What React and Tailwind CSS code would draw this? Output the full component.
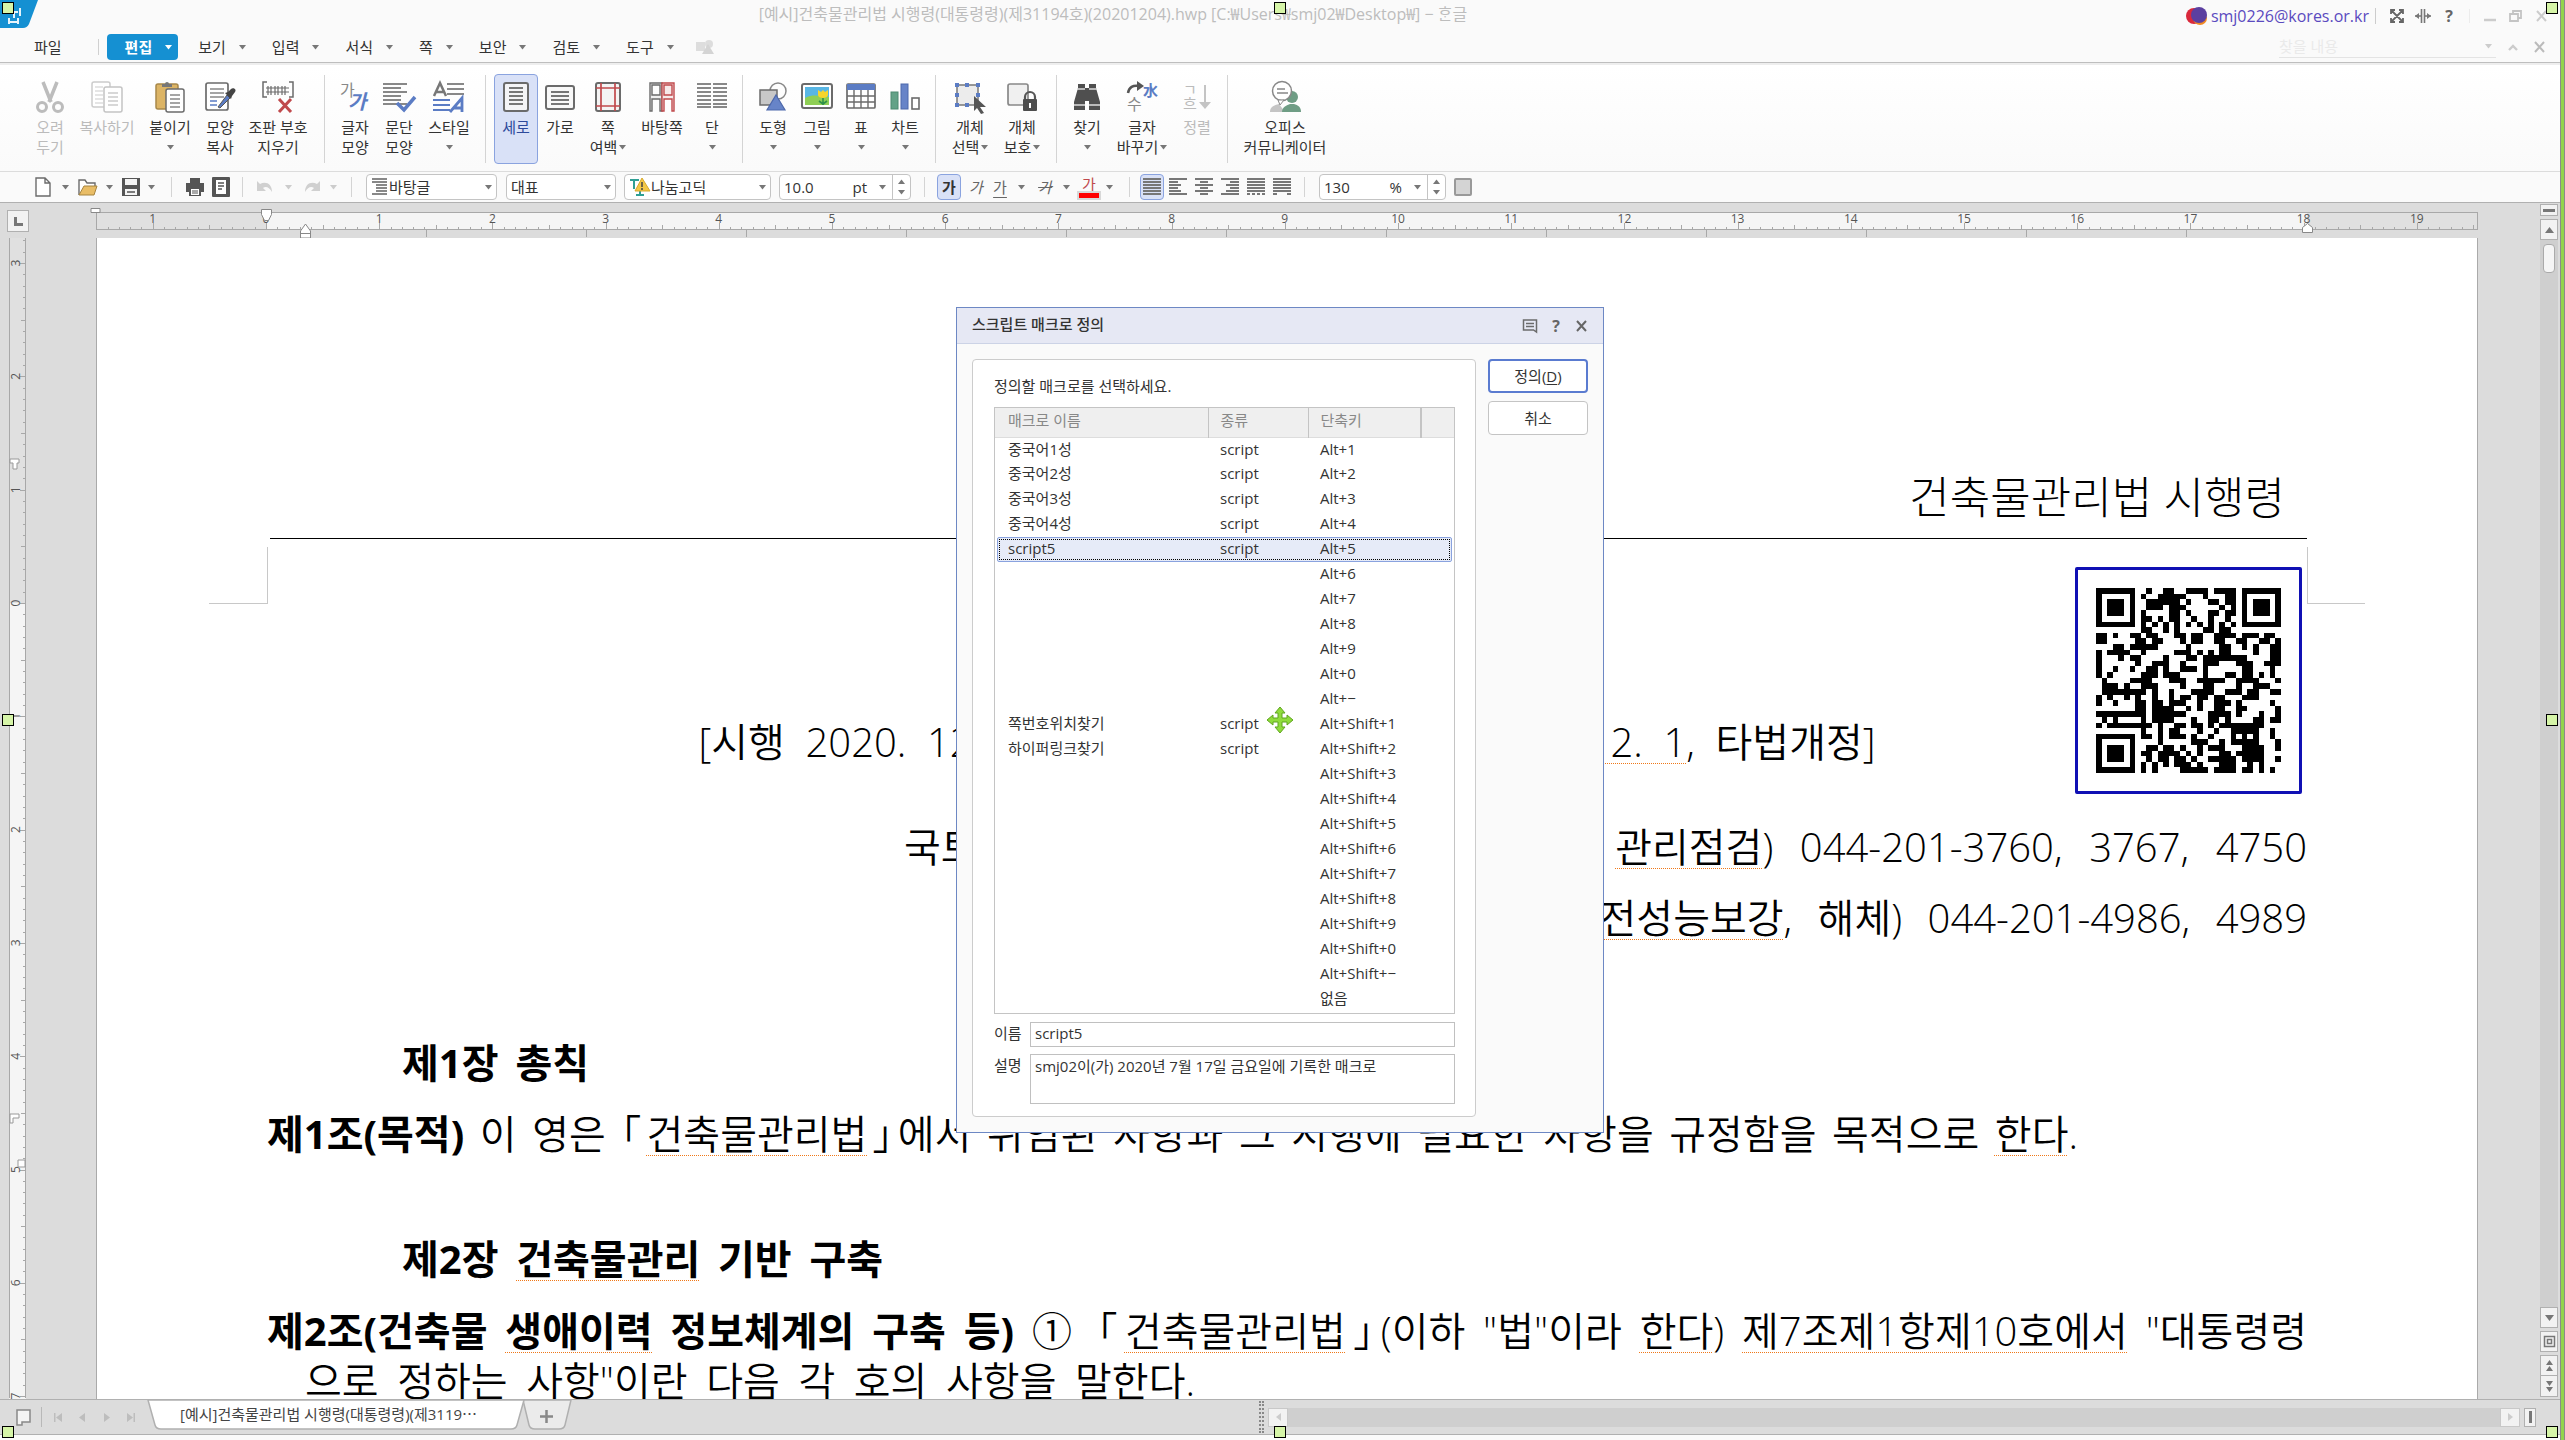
import { useState } from 'react';

const QR_ROWS = [
    '#######..#..##..####.####.#######',
    '#.....#.#..#####...#...##.#.....#',
    '#.###.#..######.#...##.##.#.###.#',
    '#.###.#..###.###......#.#.#.###.#',
    '#.###.#.#....##.#...##.##.#.###.#',
    '#.....#.##.#.##..#..#..#..#.....#',
    '#######.#.#.#.#.#.#.#.#.#.#######',
    '........##..#.#....##.##.........',
    '##.#..##.##...##.##..####.###.##.',
    '##.....##.##...#.##..##..##..##.#',
    '...##.#####.....#.....##..#.#..##',
    '#.####..#.....###.#.#.##....#..##',
    '#...#.##....#...##.########....##',
    '#......#..###..#...###...###..###',
    '#..#..#..##.#..###.#......##...#.',
    '#.#.....###.###....#...##.##.#.#.',
    '.#....####...###..#####..####...#',
    '.###.#..###....#...##....#..###..',
    '.########.#..#...####..###.##..##',
    '#.#..#.#..#..#.##.##.##...###....',
    '#..#...##.##.###..#..###.#.....#.',
    '.......##.####..#.#..##..##.....#',
    '#########.######....####.#...#..#',
    '.#.#....#.####...#..##.#....##.##',
    '#.########.#..##.##.#.########...',
    '........#..#.##...#..#..#####..#.',
    '#######.##.#.###.#..#...#.#.#..#.',
    '#.....#....#.....###..#.#####...#',
    '#.###.#..##.##.#..#.###...####..#',
    '#.###.#.##.####.#.#...##.#####...',
    '#.###.#..#.##.##.#..#####.####..#',
    '#.....#.#.#.#.###.#...###..#.#...',
    '#######.#.#....#####.####.##.#.#.',
];

const QR_PATH = QR_ROWS.map((row, y) =>
    [...row].map((c, x) => (c === '#' ? `M${x} ${y}h1v1h-1z` : '')).join('')
).join('');

const MACROS = [
    ['중국어1성', 'script', 'Alt+1'],
    ['중국어2성', 'script', 'Alt+2'],
    ['중국어3성', 'script', 'Alt+3'],
    ['중국어4성', 'script', 'Alt+4'],
    ['script5', 'script', 'Alt+5'],
    ['', '', 'Alt+6'],
    ['', '', 'Alt+7'],
    ['', '', 'Alt+8'],
    ['', '', 'Alt+9'],
    ['', '', 'Alt+0'],
    ['', '', 'Alt+−'],
    ['쪽번호위치찾기', 'script', 'Alt+Shift+1'],
    ['하이퍼링크찾기', 'script', 'Alt+Shift+2'],
    ['', '', 'Alt+Shift+3'],
    ['', '', 'Alt+Shift+4'],
    ['', '', 'Alt+Shift+5'],
    ['', '', 'Alt+Shift+6'],
    ['', '', 'Alt+Shift+7'],
    ['', '', 'Alt+Shift+8'],
    ['', '', 'Alt+Shift+9'],
    ['', '', 'Alt+Shift+0'],
    ['', '', 'Alt+Shift+−'],
    ['', '', '없음'],
];

const G = '#6b6b6b';
const BLUE = '#5b7cc4';

const Svg = ({ w = 32, h = 32, vw = w, vh = h, children, className = '' }) => (
    <svg width={w} height={h} viewBox={`0 0 ${vw} ${vh}`} fill="none" className={`overflow-visible ${className}`} aria-hidden="true">
        {children}
    </svg>
);

const Caret = ({ className = 'text-[#777]' }) => (
    <Svg w={7} h={5} className={className}>
        <path d="M0 0h7L3.5 4.5z" fill="currentColor" />
    </Svg>
);

const lines = (x1, x2, ys) => ys.map((y) => `M${x1} ${y}H${x2}`).join('');

const icons = {
    cut: (
        <Svg>
            <path d="M9 1l8 20M23 1l-8 20" stroke="#bcbcbc" strokeWidth="3.5" />
            <circle cx="8" cy="26" r="4.5" stroke="#bcbcbc" strokeWidth="3" />
            <circle cx="24" cy="26" r="4.5" stroke="#bcbcbc" strokeWidth="3" />
        </Svg>
    ),
    copy: (
        <Svg>
            <rect x="1" y="1" width="18" height="25" rx="2" fill="#fff" stroke="#ccc" strokeWidth="1.5" />
            <path d={lines(4, 12, [6, 10, 14, 18, 22])} stroke="#ddd" strokeWidth="1.5" />
            <rect x="13" y="6" width="18" height="25" rx="2" fill="#fff" stroke="#c4c4c4" strokeWidth="1.5" />
            <path d={lines(17, 27, [12, 16, 20, 24])} stroke="#ccc" strokeWidth="1.5" />
        </Svg>
    ),
    paste: (
        <Svg>
            <rect x="2" y="3" width="22" height="25" rx="2" fill="#dcb465" stroke="#a8884a" strokeWidth="1.5" />
            <path d="M8 6V3h3a2 2 0 0 1 4 0h3v3z" fill="#777" />
            <rect x="12" y="8" width="18" height="23" rx="2" fill="#fff" stroke={G} strokeWidth="1.5" />
            <path d={lines(16, 26, [14, 18, 22, 26])} stroke="#888" strokeWidth="1.5" />
        </Svg>
    ),
    shape: (
        <Svg>
            <rect x="2" y="2" width="22" height="27" rx="2" fill="#fff" stroke={G} strokeWidth="1.7" />
            <path d={lines(6, 20, [8, 12, 16])} stroke="#888" strokeWidth="1.7" />
            <path d={lines(6, 13, [20, 24])} stroke={BLUE} strokeWidth="1.7" />
            <path d="M14 26l9-12 3 3-10 10z" fill={BLUE} stroke="#555" />
            <path d="M21 12l6 6 1-3 3-4c2-3-2-5-4-3l-3 3z" fill="#444" />
        </Svg>
    ),
    erase: (
        <Svg>
            <path d="M5 1H1v15h4M27 1h4v15h-4" stroke={G} strokeWidth="1.5" />
            <path d="M6 5v9M9 5v9M13 5v9M16 5v9M20 5v9M23 5v9M4 7h23M4 11h23" stroke={G} strokeWidth="1.2" />
            <path d="M17 18l12 13M29 18L17 31" stroke="#c0494c" strokeWidth="3" />
        </Svg>
    ),
    char: (
        <Svg>
            <text x="1" y="15" fontSize="16" fill="#888">가</text>
            <text x="9" y="28" fontSize="20" fontStyle="italic" fontWeight="bold" fill={BLUE}>가</text>
        </Svg>
    ),
    para: (
        <Svg>
            <path d={lines(0, 24, [3, 11, 23]) + lines(0, 18, [7, 15, 19])} stroke="#888" strokeWidth="2" />
            <path d="M14 22l7 7L32 16" stroke={BLUE} strokeWidth="3.5" />
        </Svg>
    ),
    style: (
        <Svg>
            <path d="M1 15L7 2l6 13M3 11h8" stroke="#777" strokeWidth="2.5" />
            <path d={lines(14, 31, [3, 8, 13])} stroke="#888" strokeWidth="2" />
            <path d={lines(0, 17, [19, 24, 29])} stroke={BLUE} strokeWidth="2" />
            <path d="M17 31l12-14v14M21 27h8" stroke={BLUE} strokeWidth="2.8" />
        </Svg>
    ),
    portrait: (
        <Svg>
            <rect x="4" y="2" width="24" height="28" rx="2" fill="#f4f4f6" stroke={G} strokeWidth="2" />
            <path d={lines(9, 23, [7, 11, 15, 19, 23])} stroke="#777" strokeWidth="2" />
        </Svg>
    ),
    landscape: (
        <Svg>
            <rect x="2" y="5" width="28" height="23" rx="2" fill="#f8f8f8" stroke={G} strokeWidth="2" />
            <path d={lines(7, 25, [11, 15, 19, 23])} stroke="#777" strokeWidth="2" />
        </Svg>
    ),
    margin: (
        <Svg>
            <rect x="4" y="2" width="24" height="28" rx="2" fill="#f4f4f4" stroke={G} strokeWidth="2" />
            <path d="M9 2v28M23 2v28M4 7h24M4 25h24" stroke="#c0494c" strokeWidth="1.7" />
        </Svg>
    ),
    master: (
        <Svg>
            <path d="M16 2H4v28h2V18h8v12h2zM6 4h8v10H6z" fill="#f0f0f0" stroke={G} strokeWidth="1.4" />
            <path d="M16 2h12v28h-2V18h-8v12h-2zM18 4h8v10h-8z" fill="#f6eaea" stroke="#c0494c" strokeWidth="1.4" />
        </Svg>
    ),
    columns: (
        <Svg>
            <path d={lines(1, 15, [3, 7, 11, 15, 19, 23, 26]) + lines(17, 31, [3, 7, 11, 15, 19, 23, 26])} stroke="#888" strokeWidth="2" />
        </Svg>
    ),
    draw: (
        <Svg>
            <circle cx="21" cy="10" r="8" stroke="#888" strokeWidth="1.5" />
            <rect x="3" y="9" width="17" height="15" fill="#c8c8c8" stroke={G} strokeWidth="1.5" />
            <path d="M19 14l9 15H10z" fill="#6784c8" stroke="#4d68ab" strokeWidth="1.2" />
        </Svg>
    ),
    picture: (
        <Svg>
            <rect x="1" y="3" width="30" height="24" rx="2" fill="#fff" stroke={G} strokeWidth="2" />
            <rect x="4" y="6" width="24" height="18" fill="#58b6e4" />
            <path d="M4 17c8-4 14-2 24-1v8H4z" fill="#8fcf55" />
            <path d="M17 9l3 2 2-2 2 2 3-2v5c0 4-10 4-10 0z" fill="#f7d52a" />
            <path d="M22 17v7M22 23l-4-3M22 23l4-3" stroke="#2f9048" strokeWidth="1.6" />
        </Svg>
    ),
    table: (
        <Svg>
            <rect x="2" y="3" width="28" height="24" rx="1" fill="#fff" stroke={G} strokeWidth="1.7" />
            <rect x="2" y="3" width="28" height="6" fill={BLUE} />
            <path d="M9 9v18M16 9v18M23 9v18M2 15h28M2 21h28" stroke={G} strokeWidth="1.4" />
        </Svg>
    ),
    chart: (
        <Svg>
            <rect x="2" y="11" width="7" height="17" fill="#63a287" stroke="#4d8a70" />
            <rect x="12" y="3" width="7" height="25" fill="#6784c8" stroke="#4d68ab" />
            <rect x="23" y="17" width="7" height="11" fill="#fff" stroke={G} strokeWidth="1.6" />
        </Svg>
    ),
    select: (
        <Svg>
            <rect x="3" y="4" width="21" height="20" fill="#ececec" stroke="#777" strokeWidth="1.5" />
            <path d="M1 2h4v4H1zM11 2h4v4h-4zM22 2h4v4h-4zM1 12h4v4H1zM22 12h4v4h-4zM1 22h4v4H1zM11 22h4v4h-4z" fill={BLUE} />
            <path d="M20 15l12 11-6 0 4 6-3 1-4-6-3 3z" fill="#555" />
        </Svg>
    ),
    protect: (
        <Svg>
            <rect x="2" y="3" width="20" height="21" rx="2" fill="#f0f0f0" stroke="#888" strokeWidth="1.7" />
            <path d="M19 19v-3a5 5 0 0 1 10 0v3" stroke="#555" strokeWidth="2.2" />
            <rect x="17" y="18" width="14" height="12" rx="1" fill="#4d4d4d" />
            <path d="M24 22v5" stroke="#fff" strokeWidth="2" />
        </Svg>
    ),
    find: (
        <Svg>
            <path d="M7 3h7v4h4V3h7v4l4 14v8H18v-9h-4v9H3v-8L7 7z" fill="#4f4f4f" />
            <path d="M6 8h8M18 8h8M3 24h11M18 24h11" stroke="#ddd" strokeWidth="1.3" />
        </Svg>
    ),
    swap: (
        <Svg>
            <path d="M2 12C3 6 7 4 13 5" stroke="#555" strokeWidth="2.5" />
            <path d="M11 0l7 5-7 5z" fill="#555" />
            <text x="17" y="15" fontSize="15" fontWeight="bold" fill={BLUE}>水</text>
            <text x="1" y="29" fontSize="16" fill="#888">수</text>
        </Svg>
    ),
    sort: (
        <Svg>
            <text x="2" y="14" fontSize="15" fill="#bbb">ㄱ</text>
            <text x="2" y="28" fontSize="15" fill="#bbb">흐</text>
            <path d="M24 4v22" stroke="#c4c4c4" strokeWidth="2" />
            <path d="M18 21h12l-6 7z" fill="#c4c4c4" />
        </Svg>
    ),
    office: (
        <Svg>
            <path d="M1 31c0-5 4-7 9-8l6 8z" fill="#c4c4c4" />
            <circle cx="23" cy="16" r="6" fill="#6f9d85" />
            <path d="M13 31c0-5 5-7 8-8h4c4 1 7 3 7 8z" fill="#6f9d85" />
            <circle cx="13" cy="10" r="9.5" fill="#fff" stroke="#888" strokeWidth="1.5" />
            <path d="M9 19l2 5 4-5z" fill="#fff" stroke="#888" />
            <path d="M8 8h8M8 12h11" stroke="#888" strokeWidth="1.5" />
        </Svg>
    ),
};

// l2 is the second label line, arrow puts a caret after it
const ribbonGroups = [
    [
        { icon: 'cut', l1: '오려', l2: '두기', w: 'w-[48px]', off: true },
        { icon: 'copy', l1: '복사하기', w: 'w-[66px]', off: true },
        { icon: 'paste', l1: '붙이기', arrow: true, w: 'w-[60px]' },
        { icon: 'shape', l1: '모양', l2: '복사', w: 'w-[40px]' },
        { icon: 'erase', l1: '조판 부호', l2: '지우기', w: 'w-[76px]' },
    ],
    [
        { icon: 'char', l1: '글자', l2: '모양', w: 'w-11' },
        { icon: 'para', l1: '문단', l2: '모양', w: 'w-11' },
        { icon: 'style', l1: '스타일', arrow: true, w: 'w-14' },
    ],
    [
        { icon: 'portrait', l1: '세로', w: 'w-11', on: true },
        { icon: 'landscape', l1: '가로', w: 'w-11' },
        { icon: 'margin', l1: '쪽', l2: '여백', arrow: true, w: 'w-[52px]' },
        { icon: 'master', l1: '바탕쪽', w: 'w-14' },
        { icon: 'columns', l1: '단', arrow: true, w: 'w-11' },
    ],
    [
        { icon: 'draw', l1: '도형', arrow: true, w: 'w-11' },
        { icon: 'picture', l1: '그림', arrow: true, w: 'w-11' },
        { icon: 'table', l1: '표', arrow: true, w: 'w-11' },
        { icon: 'chart', l1: '차트', arrow: true, w: 'w-11' },
    ],
    [
        { icon: 'select', l1: '개체', l2: '선택', arrow: true, w: 'w-[52px]' },
        { icon: 'protect', l1: '개체', l2: '보호', arrow: true, w: 'w-[52px]' },
    ],
    [
        { icon: 'find', l1: '찾기', arrow: true, w: 'w-11' },
        { icon: 'swap', l1: '글자', l2: '바꾸기', arrow: true, w: 'w-[66px]' },
        { icon: 'sort', l1: '정렬', w: 'w-11', off: true },
    ],
    [{ icon: 'office', l1: '오피스', l2: '커뮤니케이터', w: 'w-[98px]' }],
];

const RibbonButton = ({ item }) => (
    <button
        className={`${item.w} h-[90px] flex flex-col items-center pt-1.5 leading-5 whitespace-nowrap rounded-sm border ${
            item.on ? 'bg-[#d9e1f7] border-[#8aa3df] text-[#2d4a9b]' : 'border-transparent'
        } ${item.off ? 'text-[#bbb]' : ''}`}
    >
        {icons[item.icon]}
        <span className="mt-1">{item.l1}</span>
        <span className="flex items-center gap-0.5 h-5">
            {item.l2}
            {item.arrow && <Caret />}
        </span>
    </button>
);

const TitleBar = () => (
    <div className="flex h-[31px]">
        <div className="w-[40px]">
            <Svg w={38} h={28}>
                <path d="M0 0h38l-9 24q-2 4-6 4H0z" fill="#1590d2" />
                <path d="M9 22h10M14 12v6M9 18v6M18 18v6M11 12h7M20 8v8" stroke="#e6f4fb" strokeWidth="2" />
            </Svg>
        </div>
        <div className="flex-1 text-center text-base text-[#bdbdbd] leading-[28px]">
            [예시]건축물관리법 시행령(대통령령)(제31194호)(20201204).hwp [C:₩Users₩smj02₩Desktop₩] − ᄒᆞᆫ글
        </div>
        <div className="flex items-center h-[31px] text-[#5a4abf] pr-3">
            <Svg w={21} h={18} className="mr-1">
                <circle cx="8" cy="9" r="8" fill="#d9283b" />
                <circle cx="14" cy="11" r="7" fill="#f08a24" />
                <circle cx="13" cy="8" r="8" fill="#5b3fa0" />
            </Svg>
            <a href="#account" className="text-base">smj0226@kores.or.kr</a>
            <span className="mx-1.5 w-px h-4 bg-[#ccc]" />
            <button aria-label="전체 화면" className="ml-2 w-4">
                <Svg w={14} h={14}>
                    <path d="M1 5V1h4M9 1h4v4M13 9v4H9M5 13H1V9M1 1l12 12M13 1L1 13" stroke="#666" strokeWidth="1.8" />
                </Svg>
            </button>
            <button aria-label="너비 맞춤" className="ml-[9px] w-4">
                <Svg w={16} h={14}>
                    <path d="M6.5 0v14M9.5 0v14M0 7h6M10 7h6" stroke="#777" strokeWidth="1.6" />
                    <path d="M0 7l4-3v6zM16 7l-4-3v6z" fill="#777" />
                </Svg>
            </button>
            <button className="ml-3 w-3 text-base font-bold text-[#666]">?</button>
            <span className="mx-3.5 w-px h-3.5 bg-[#ececec]" />
            <button aria-label="최소화" className="w-[13px]">
                <Svg w={12} h={12}><path d="M0 10h12" stroke="#ccc" strokeWidth="2.5" /></Svg>
            </button>
            <button aria-label="이전 크기로" className="ml-3 w-[13px]">
                <Svg w={13} h={12}>
                    <path d="M1 4h8v7H1zM4 4V1h8v7H9" stroke="#c4c4c4" strokeWidth="1.8" />
                </Svg>
            </button>
            <button aria-label="닫기" className="ml-3.5 w-3">
                <Svg w={11} h={10}><path d="M1 0l9 10M10 0L1 10" stroke="#ccc" strokeWidth="2" /></Svg>
            </button>
        </div>
    </div>
);

const menus = ['편집', '보기', '입력', '서식', '쪽', '보안', '검토', '도구'];

const MenuBar = () => (
    <div className="flex items-center h-8 pt-px border-b border-[#bebebe]">
        <button className="ml-[34px]">파일</button>
        <span className="ml-9 mr-2 w-px h-4 bg-[#d0d0d0]" />
        <nav className="flex gap-0.5 h-[26px]">
            {menus.map((m, i) => (
                <button
                    key={m}
                    className={`flex items-center gap-[13px] pl-[18px] pr-1.5 rounded-sm ${
                        i === 0 ? 'bg-[#1590d2] text-white font-bold' : ''
                    }`}
                >
                    {m}
                    <Caret className={i === 0 ? 'text-white' : 'text-[#777]'} />
                </button>
            ))}
        </nav>
        <Svg w={18} h={16} className="ml-4">
            <rect x="0" y="3" width="9" height="9" fill="#ddd" />
            <circle cx="13" cy="5" r="4" fill="#ddd" />
            <path d="M12 5l6 10H6z" fill="#d4d4d4" />
        </Svg>
        <span className="flex-1" />
        <div className="flex items-center w-[217px] h-[22px] border-b border-[#e4e4e4] pr-1 mr-3">
            <input aria-label="찾을 내용" placeholder="찾을 내용" className="flex-1 min-w-0 outline-none bg-transparent placeholder:text-[#eaeaea]" />
            <Caret className="text-[#ccc]" />
        </div>
        <button aria-label="리본 접기" className="w-5">
            <Svg w={11} h={7}><path d="M1 6l4-4 4 4" stroke="#ccc" strokeWidth="2.4" /></Svg>
        </button>
        <button aria-label="문서 닫기" className="ml-1.5 mr-3.5 w-3">
            <Svg w={11} h={10}><path d="M1 0l9 10M10 0L1 10" stroke="#bbb" strokeWidth="2" /></Svg>
        </button>
    </div>
);

const Sep = ({ className = 'mx-3' }) => <span className={`${className} w-px h-5 bg-[#d4d4d4]`} />;

const Combo = ({ label, value, icon, className }) => (
    <label className={`flex items-center h-[26px] bg-white border border-[#c4c4c4] rounded-sm px-1 ${className}`}>
        {icon}
        <select aria-label={label} className="appearance-none flex-1 min-w-0 outline-none bg-transparent">
            <option>{value}</option>
        </select>
        <Caret />
    </label>
);

const Spin = ({ label, value, unit, className }) => (
    <div className={`flex items-center h-[26px] bg-white border border-[#c4c4c4] rounded-sm ${className}`}>
        <input aria-label={label} defaultValue={value} className="flex-1 min-w-0 pl-1 outline-none" />
        <span>{unit}</span>
        <span className="ml-3 mr-1.5"><Caret /></span>
        <span className="flex flex-col items-center justify-between w-[18px] h-full py-1 border-l border-[#c4c4c4]">
            <button aria-label="늘리기"><Svg w={7} h={5} className="rotate-180 text-[#777]"><path d="M0 0h7L3.5 4.5z" fill="currentColor" /></Svg></button>
            <button aria-label="줄이기"><Caret /></button>
        </span>
    </div>
);

const aligns = [
    ['양쪽 정렬', lines(0, 18, [1, 4, 7, 10, 13, 16])],
    ['왼쪽 정렬', lines(0, 18, [1, 16]) + lines(0, 9, [4, 10]) + lines(0, 12, [7, 13])],
    ['가운데 정렬', lines(0, 18, [1, 7, 13]) + lines(5, 13, [4, 10, 16])],
    ['오른쪽 정렬', lines(0, 18, [1, 16]) + lines(9, 18, [4, 10]) + lines(5, 18, [7, 13])],
    ['배분 정렬', lines(0, 18, [1, 4, 7, 10, 13]) + 'M0 16h3M5 16h3M10 16h3M15 16h3'],
    ['나눔 정렬', lines(0, 18, [1, 4, 7, 10, 13]) + 'M0 16h4M14 16h4'],
];

const Toolbar = () => (
    <div className="flex items-center h-[31px] border-b border-[#b0b0b0] bg-[#fafafa]">
        <button aria-label="새 문서" className="ml-[34px]">
            <Svg w={18} h={20}><path d="M2 1h9l5 5v13H2zM11 1v5h5" fill="#fff" stroke={G} strokeWidth="1.4" /></Svg>
        </button>
        <span className="ml-2.5 mr-[9px]"><Caret /></span>
        <button aria-label="불러오기">
            <Svg w={20} h={20}>
                <path d="M1 18V3h6l2 3h8v4" fill="#fff" stroke={G} strokeWidth="1.4" />
                <path d="M1 18l5-9h13l-3 9z" fill="#e9bd66" stroke="#a5833f" />
            </Svg>
        </button>
        <span className="ml-2 mr-[9px]"><Caret /></span>
        <button aria-label="저장하기">
            <Svg w={18} h={20}>
                <path d="M0 1h18v18H0z" fill="#555" />
                <path d="M3 2h12v6H3zM3 12h12v6H3z" fill="#f4f4f4" />
                <path d="M5 15h8" stroke="#555" strokeWidth="1.5" />
            </Svg>
        </button>
        <span className="ml-2"><Caret /></span>
        <Sep className="ml-4 mr-3.5" />
        <button aria-label="인쇄">
            <Svg w={18} h={20}>
                <path d="M4 1h10v5H4zM0 6h18v9h-3v4H3v-4H0z" fill="#555" />
                <path d="M5 12h8v6H5z" fill="#fff" />
                <path d="M6 14h6M6 16h6" stroke="#555" />
            </Svg>
        </button>
        <button aria-label="미리 보기" className="ml-2">
            <Svg w={18} h={20}>
                <rect width="18" height="20" rx="1" fill="#555" />
                <path d="M4 3h10v14H4z" fill="#fff" />
                <path d="M6 6h6M6 9h6M6 12h4" stroke="#555" strokeWidth="1.5" />
            </Svg>
        </button>
        <Sep className="ml-3 mr-3.5" />
        <button aria-label="되돌리기">
            <Svg w={18} h={16}><path d="M0 2v10h9L6 9c3-2 6-1 9 4C15 5 9 2 3 5z" fill="#d0d0d0" /></Svg>
        </button>
        <span className="ml-2.5 mr-2.5"><Caret className="text-[#ccc]" /></span>
        <button aria-label="다시 실행">
            <Svg w={18} h={16}><path d="M18 2v10H9l3-3c-3-2-6-1-9 4C3 5 9 2 15 5z" fill="#d0d0d0" /></Svg>
        </button>
        <span className="ml-2.5"><Caret className="text-[#ccc]" /></span>
        <Sep className="ml-3.5 mr-3.5" />
        <Combo
            label="스타일"
            value="바탕글"
            className="w-[131px] mr-[9px]"
            icon={<Svg w={18} h={18}><path d={lines(1, 16, [1, 4]) + lines(5, 16, [7, 10, 13]) + lines(1, 16, [16])} stroke="#888" strokeWidth="2" /></Svg>}
        />
        <Combo label="언어" value="대표" className="w-[110px] mr-2" />
        <Combo
            label="글꼴"
            value="나눔고딕"
            className="w-[147px] mr-2"
            icon={
                <Svg w={22} h={20}>
                    <path d="M1 3h9M5 3v9M11 8v10M7 18h8" stroke="#2f9f94" strokeWidth="2" />
                    <path d="M13 1l8 13H6z" fill="#f3c746" stroke="#d8a92c" />
                    <path d="M13 5v5M13 11v2" stroke="#444" strokeWidth="1.5" />
                </Svg>
            }
        />
        <Spin label="글자 크기" value="10.0" unit="pt" className="w-[132px]" />
        <Sep className="ml-[13px] mr-3" />
        <button className="w-6 h-[26px] rounded-sm border border-[#8aa3df] bg-[#d9e1f7] font-bold">가</button>
        <button className="w-6 ml-[3px] italic text-[#666]">가</button>
        <button className="w-6 text-[#666] underline underline-offset-4">가</button>
        <span className="ml-1.5 mr-2"><Caret /></span>
        <button className="w-6 italic text-[#666] line-through">가</button>
        <span className="ml-1.5 mr-2"><Caret /></span>
        <button className="flex flex-col items-center w-[22px] text-[#c0494c] leading-[17px]">
            가
            <span className="w-5 h-[5px] bg-[#f00] outline-2 outline-[#d8d8d8]" />
        </button>
        <span className="ml-1.5"><Caret /></span>
        <Sep className="ml-4 mr-2.5" />
        {aligns.map(([name, d], i) => (
            <button
                key={name}
                aria-label={name}
                className={`flex items-center justify-center w-6 h-[26px] mr-0.5 rounded-sm border ${
                    i === 0 ? 'border-[#8aa3df] bg-[#d9e1f7]' : 'border-transparent'
                }`}
            >
                <Svg w={18} h={18}><path d={d} stroke="#777" strokeWidth="2" /></Svg>
            </button>
        ))}
        <Sep className="ml-2 mr-3.5" />
        <Spin label="확대 비율" value="130" unit="%" className="w-[127px]" />
        <button aria-label="쪽 맞춤" className="ml-2 w-[18px] h-[18px] rounded-xs border-2 border-[#999] bg-[#d4d4d4]" />
    </div>
);

const UNIT = 113.2;
const ZERO = 170;

const HorizontalRuler = () => {
    const ticks = [];
    for (let i = -15; i <= 195; i++) {
        const x = Math.round(ZERO + (i * UNIT) / 10);
        if (x < 1 || x > 2380) continue;
        const len = i % 10 === 0 ? 6 : i % 5 === 0 ? 4 : 2;
        ticks.push(`M${x}.5 26v-${len}`);
    }
    const tabs = [];
    for (let x = 330; x < 2210; x += 160) tabs.push(`M${x}.5 27v7`);
    return (
        <Svg w={2382} h={35}>
            <rect x="0.5" y="9.5" width="2381" height="17" fill="#e0e0e0" stroke="#a8a8a8" />
            <rect x={ZERO} y="10" width="2041" height="16" fill="#f5f5f5" />
            <path d={ticks.join('') + tabs.join('')} stroke="#a8a8a8" />
            {Array.from({ length: 21 }, (_, i) => i - 1).map((n) => (
                <text key={n} x={ZERO + n * UNIT} y="20" fontSize="12" textAnchor="middle" fill="#555">
                    {Math.abs(n)}
                </text>
            ))}
            <path d="M-5 5.5h9v4h-9zM165.5 6.5h10v5l-3 6h-4l-3-6z" fill="#fff" stroke="#888" />
            <path d="M204.5 35v-7l5-7 5 7v7zM204.5 30.5h10" fill="#fff" stroke="#888" />
            <path d="M2206.5 29.5v-5l5-4 5 4v5z" fill="#fff" stroke="#888" />
        </Svg>
    );
};

const VerticalRuler = () => {
    const ticks = [];
    for (let i = -32; i <= 70; i++) {
        const y = Math.round(365 + (i * 113.3) / 10);
        const len = i % 10 === 0 ? 5 : i % 5 === 0 ? 4 : 2;
        ticks.push(`M16 ${y}.5h-${len}`);
    }
    return (
        <Svg w={26} h={1160} className="pl-[9px] shrink-0" vw={17}>
            <rect width="17" height="365" fill="#e0e0e0" />
            <rect y="365" width="17" height="800" fill="#f5f5f5" />
            <path d="M.5 0v1160M16.5 0v1160" stroke="#a8a8a8" />
            <path d={ticks.join('')} stroke="#a8a8a8" />
            {[-3, -2, -1, 0, 1, 2, 3, 4, 5, 6, 7].map((n) => (
                <text key={n} transform={`translate(11 ${365 + n * 113.3}) rotate(-90)`} fontSize="12" textAnchor="middle" fill="#555">
                    {Math.abs(n)}
                </text>
            ))}
            <path d="M1 221h9v4h-2v6H4v-6H1z" fill="#fff" stroke="#999" />
            <path d="M1 876h9v4H4v5H1zM9 922h7v7H9z" fill="#fff" stroke="#999" />
        </Svg>
    );
};

const Mis = ({ children }) => (
    <span className="underline decoration-dotted decoration-1 decoration-[#f07818] underline-offset-[6px]">{children}</span>
);

const Page = () => (
    <article className="relative w-[2382px] shrink-0 bg-white border-x border-[#aaa] pt-[234px] px-[170px] text-black text-[40px] leading-[50px] font-[350] whitespace-nowrap [font-feature-settings:'halt']">
        <h1 className="pr-[22px] text-right text-[44px] leading-[50px] font-light">건축물관리법 시행령</h1>
        <hr className="mt-4 ml-[3px] border-black" />
        <div className="mt-2 -mx-[58px] flex justify-between">
            <span className="w-[59px] h-[57px] border-r border-b border-[#c8c8c8]" />
            <span className="w-[58px] h-[57px] border-l border-b border-[#c8c8c8]" />
        </div>
        <div className="absolute top-[329px] right-[175px] w-[227px] h-[227px] p-[18px] border-3 border-[#1010b4] rounded-xs bg-white">
            <svg viewBox="0 0 33 33" className="w-full h-full" shapeRendering="crispEdges" role="img" aria-label="QR 코드">
                <path d={QR_PATH} fill="#000" />
            </svg>
        </div>
        <p className="mt-[113px] mx-auto w-[1177px] [text-align-last:justify]">
            [시행 2020. 12. 4.] [대통령령 제31194호, 2020. <Mis>12. 1</Mis>, 타법개정]
        </p>
        <p className="mt-[55px] ml-auto w-[1403px] [text-align-last:justify]">
            국토교통부(녹색건축정책과-총괄, 건축물 <Mis>관리점검</Mis>) 044-201-3760, 3767, 4750
        </p>
        <p className="mt-[21px] ml-auto w-[1136px] [text-align-last:justify]">
            국토교통부(건축안전과-<Mis>안전성능보강</Mis>, 해체) 044-201-4986, 4989
        </p>
        <h2 className="mt-[95px] ml-[135px] w-[187px] font-bold [text-align-last:justify]">제1장 총칙</h2>
        <p className="mt-[21px] w-[1811px] [text-align-last:justify]">
            <b className="font-bold">제1조(목적)</b> 이 영은 「<Mis>건축물관리법</Mis>」에서 위임된 사항과 그 시행에 필요한 사항을 규정함을 목적으로 <Mis>한다</Mis>.
        </p>
        <h2 className="mt-[75px] ml-[135px] w-[481px] font-bold [text-align-last:justify]">
            제2장 <Mis>건축물관리</Mis> 기반 구축
        </h2>
        <p className="mt-[22px] [text-align-last:justify]">
            <b className="font-bold">제2조(건축물 <Mis>생애이력</Mis> 정보체계의 구축 등)</b> ① 「<Mis>건축물관리법</Mis>」(이하 "법"이라 <Mis>한다</Mis>) <Mis>제7조제1항제10호에서</Mis> "대통령령
        </p>
        <p className="ml-[38px] w-[890px] [text-align-last:justify]">으로 정하는 사항"이란 다음 각 호의 사항을 말한다.</p>
    </article>
);

const arrowPath = {
    up: 'M0 6h9L4.5 0z',
    down: 'M0 0h9L4.5 6z',
    up2: 'M1 5h7L4.5 0zM1 11h7L4.5 6z',
    down2: 'M1 0h7L4.5 5zM1 6h7L4.5 11z',
};

const ScrollButton = ({ name, d, vh, className = '' }) => (
    <button aria-label={name} className={`flex items-center justify-center w-[18px] h-[21px] bg-[#f2f2f2] border border-[#b0b0b0] ${className}`}>
        <Svg w={9} h={vh}><path d={d} fill="#777" /></Svg>
    </button>
);

const VerticalScroll = () => (
    <div className="flex flex-col items-center w-6 pl-0.5 pt-px">
        <button aria-label="창 나누기" className="flex items-center justify-center w-[18px] h-3 bg-[#f2f2f2] border border-[#b0b0b0]">
            <span className="w-3 h-[3px] bg-[#777]" />
        </button>
        <ScrollButton name="위로" d={arrowPath.up} vh={6} className="mt-[3px]" />
        <div className="flex-1 w-[18px] pt-1 bg-[#cfcfcf]">
            <div className="mx-[3px] h-[29px] rounded-sm bg-[#f5f5f5] border border-[#aaa]" />
        </div>
        <ScrollButton name="아래로" d={arrowPath.down} vh={6} />
        <button aria-label="찾아가기" className="flex items-center justify-center my-[3px] w-[18px] h-[21px] bg-[#f2f2f2] border border-[#b0b0b0]">
            <Svg w={11} h={11}><path d="M.5.5h10v10H.5zM3.5 3.5h4v4h-4z" stroke="#777" strokeWidth="1.5" /></Svg>
        </button>
        <ScrollButton name="이전 쪽" d={arrowPath.up2} vh={11} />
        <ScrollButton name="다음 쪽" d={arrowPath.down2} vh={11} className="mb-0.5 border-t-0" />
    </div>
);

const BottomBar = () => (
    <div className="flex h-9 bg-[#dcdcdc] border-t border-b border-[#b0b0b0]">
        <div className="flex items-center w-[148px] text-[#bdbdbd]">
            <Svg w={15} h={17} className="ml-4">
                <path d="M1 1h13v12H6v3H1z" fill="#f4f4f4" stroke="#888" strokeWidth="1.5" />
            </Svg>
            <span className="ml-2.5 mr-3 w-px h-5 bg-[#b8b8b8]" />
            <button aria-label="첫 탭"><Svg w={8} h={9}><path d="M8 0v9L2 4.5zM0 0h1.5v9H0z" fill="currentColor" /></Svg></button>
            <button aria-label="이전 탭" className="ml-[17px]"><Svg w={6} h={9}><path d="M6 0v9L0 4.5z" fill="currentColor" /></Svg></button>
            <button aria-label="다음 탭" className="ml-[19px]"><Svg w={6} h={9}><path d="M0 0v9l6-4.5z" fill="currentColor" /></Svg></button>
            <button aria-label="끝 탭" className="ml-[17px]"><Svg w={8} h={9}><path d="M0 0v9l6-4.5zM6.5 0H8v9H6.5z" fill="currentColor" /></Svg></button>
        </div>
        <div className="relative w-[424px] flex">
            <Svg w={424} h={31} className="absolute left-0 top-0">
                <path d="M375 0l6 25q1 4 6 4h24q5 0 6-4l6-25z" fill="#ebebeb" stroke="#b0b0b0" strokeWidth="1.5" />
                <path d="M0 0l7 25q1 4 6 4h350q5 0 6-4l7-25z" fill="#fff" stroke="#b0b0b0" strokeWidth="1.5" />
            </Svg>
            <button className="relative w-[375px] h-7 pl-8 text-left text-[#444] whitespace-nowrap">
                [예시]건축물관리법 시행령(대통령령)(제3119⋯
            </button>
            <button aria-label="새 탭" className="relative w-[47px] h-8 flex items-center justify-center">
                <Svg w={13} h={13}><path d="M6.5 0v13M0 6.5h13" stroke="#888" strokeWidth="2.5" /></Svg>
            </button>
        </div>
        <span className="flex-1" />
        <span className="w-[5px] my-px border-x-2 border-dotted border-[#888]" />
        <div className="flex items-center w-[calc(50%+16px)] pl-1">
            <button aria-label="왼쪽으로" className="flex items-center justify-center w-5 h-[19px] bg-[#f2f2f2] border border-[#c8c8c8]">
                <Svg w={5} h={8}><path d="M5 0v8L0 4z" fill="#ccc" /></Svg>
            </button>
            <span className="flex-1 h-[19px] bg-[#cfcfcf]" />
            <button aria-label="오른쪽으로" className="flex items-center justify-center w-5 h-[19px] bg-[#f2f2f2] border border-[#c8c8c8]">
                <Svg w={5} h={8}><path d="M0 0v8l5-4z" fill="#ccc" /></Svg>
            </button>
            <span className="flex items-center justify-center ml-1 mr-6 w-3 h-[19px] bg-[#f2f2f2] border border-[#b0b0b0]">
                <span className="w-[3px] h-3 bg-[#777]" />
            </span>
        </div>
    </div>
);

const MacroDialog = () => {
    const [selected, setSelected] = useState(4);
    return (
        <section role="dialog" aria-labelledby="macro-title" className="w-[648px] bg-[#fafafa] border border-[#6d88c4]">
            <header className="flex items-center h-9 pl-[15px] pr-3.5 bg-[#e6e8f4] border-b border-[#ccd3e6]">
                <h2 id="macro-title" className="flex-1 leading-5 pb-1 font-medium">스크립트 매크로 정의</h2>
                <button aria-label="의견">
                    <Svg w={16} h={14}>
                        <path d="M1.5 1h13v12l-3-2h-10z" stroke={G} strokeWidth="1.5" />
                        <path d="M4 4.5h8M4 7.5h8" stroke={G} strokeWidth="1.3" />
                    </Svg>
                </button>
                <button className="w-5 ml-2 text-base font-bold text-[#666]">?</button>
                <button aria-label="닫기" className="ml-2.5 mr-0.5">
                    <Svg w={11} h={10}><path d="M1 0l9 10M10 0L1 10" stroke="#666" strokeWidth="2" /></Svg>
                </button>
            </header>
            <div className="flex items-start gap-3 p-[15px]">
                <div className="w-[504px] pt-4 pl-[21px] pr-5 pb-3 bg-white border border-[#ccc] rounded-sm">
                    <p className="leading-5">정의할 매크로를 선택하세요.</p>
                    <div className="mt-[11px] h-[607px] bg-white border border-[#c4c4c4]">
                        <table className="w-full table-fixed text-left">
                            <colgroup>
                                <col className="w-[213px]" />
                                <col className="w-[100px]" />
                                <col className="w-[113px]" />
                                <col />
                            </colgroup>
                            <thead className="bg-[#efefef] text-[#888]">
                                <tr className="h-[29px] leading-5 border-b border-[#ddd]">
                                    <th className="pl-[13px] pb-1 font-normal border-r border-[#c4c4c4]">매크로 이름</th>
                                    <th className="pl-3 pb-1 font-normal border-r border-[#c4c4c4]">종류</th>
                                    <th className="pl-3 pb-1 font-normal border-r-2 border-[#c4c4c4]">단축키</th>
                                    <th />
                                </tr>
                            </thead>
                            <tbody>
                                {MACROS.map(([name, kind, key], i) => (
                                    <tr key={key} className="relative h-[25px] leading-[22px] align-top" onClick={() => setSelected(i)}>
                                        <td className="pl-[13px]">
                                            {selected === i && (
                                                <span className="absolute inset-x-0.5 inset-y-0 p-px bg-[#e6ebf8] border border-[#8aa3df] rounded-xs">
                                                    <span className="block h-full border border-dotted border-black" />
                                                </span>
                                            )}
                                            <span className="relative">{name}</span>
                                        </td>
                                        <td className="pl-3"><span className="relative">{kind}</span></td>
                                        <td className="pl-3"><span className="relative">{key}</span></td>
                                        <td />
                                    </tr>
                                ))}
                            </tbody>
                        </table>
                    </div>
                    <div className="mt-2 flex">
                        <label htmlFor="macro-name" className="w-9 leading-[22px]">이름</label>
                        <input id="macro-name" defaultValue="script5" className="flex-1 min-w-0 h-[25px] px-1 pb-1 border border-[#c0c0c0] outline-none" />
                    </div>
                    <div className="mt-[7px] flex">
                        <label htmlFor="macro-desc" className="w-9 leading-[22px]">설명</label>
                        <textarea id="macro-desc" defaultValue="smj02이(가) 2020년 7월 17일 금요일에 기록한 매크로" className="flex-1 min-w-0 h-[50px] px-1 leading-[22px] border border-[#c0c0c0] outline-none resize-none" />
                    </div>
                </div>
                <div className="flex flex-col gap-2 w-[100px]">
                    <button className="h-[34px] bg-white border-2 border-[#5a7bd0] rounded">정의(<u className="underline-offset-2">D</u>)</button>
                    <button className="h-[34px] bg-white border border-[#c4c4c4] rounded">취소</button>
                </div>
            </div>
        </section>
    );
};

const handle = 'absolute w-3 h-3 bg-[#d6f5a8] border border-black';

const App = () => (
    <div className="h-screen border-r border-[#8a8a8a] overflow-hidden font-['Open_Sans','Noto_Sans_CJK_KR',sans-serif] text-[15px] text-[#333]">
        <div className="h-full border-r-3 border-[#92d44c]">
            <div className="relative h-full flex flex-col border-r border-[#8a8a8a] bg-[#fafafa]">
                <TitleBar />
                <MenuBar />
                <div className="flex items-center h-[109px] pt-0.5 pl-[26px] border-t-2 border-t-[#eee] border-b border-b-[#dcdcdc] bg-linear-to-b from-white to-[#fafafa]">
                    {ribbonGroups.map((group, i) => (
                        <div key={i} className="flex items-center">
                            {i > 0 && <span className="mx-2 w-px h-[88px] bg-[#d4d4d4]" />}
                            {group.map((item, j) => <RibbonButton key={j} item={item} />)}
                        </div>
                    ))}
                </div>
                <Toolbar />
                <main className="flex-1 min-h-0 flex bg-[#dcdcdc]">
                    <div className="flex-1 min-w-0 flex flex-col">
                        <div className="flex h-[35px] overflow-hidden">
                            <div className="w-24 shrink-0 pl-[7px] pt-[7px]">
                                <button aria-label="탭 종류" className="flex items-center justify-center w-[22px] h-[22px] bg-[#f2f2f2] border border-[#b0b0b0]">
                                    <Svg w={9} h={9}><path d="M1.5 0v7.5H9" stroke="#777" strokeWidth="3" /></Svg>
                                </button>
                            </div>
                            <HorizontalRuler />
                        </div>
                        <div className="flex-1 min-h-0 flex gap-[70px] overflow-hidden">
                            <VerticalRuler />
                            <Page />
                        </div>
                    </div>
                    <VerticalScroll />
                </main>
                <BottomBar />
                <div className="h-[5px] shrink-0" />

                <div className="absolute inset-0 flex items-center justify-center">
                    <MacroDialog />
                </div>

                {/* Capture frame handles */}
                <span className={`${handle} left-0.5 top-0.5`} />
                <span className={`${handle} left-1/2 -translate-x-1/2 top-0.5`} />
                <span className={`${handle} right-0.5 top-0.5`} />
                <span className={`${handle} left-0.5 top-1/2 -translate-y-1/2`} />
                <span className={`${handle} right-0.5 top-1/2 -translate-y-1/2`} />
                <span className={`${handle} left-0.5 bottom-0.5`} />
                <span className={`${handle} left-1/2 -translate-x-1/2 bottom-0.5`} />
                <span className={`${handle} right-0.5 bottom-0.5`} />
                <Svg w={28} h={28} className="absolute left-1/2 top-1/2 -translate-x-1/2 -translate-y-1/2">
                    <path d="M14 1l5 6h-3v5h5V9l6 5-6 5v-3h-5v5h3l-5 6-5-6h3v-5H7v3l-6-5 6-5v3h5V7H9z" fill="#8fdc3c" stroke="#5fa51e" />
                </Svg>
            </div>
        </div>
    </div>
);

export default App;
